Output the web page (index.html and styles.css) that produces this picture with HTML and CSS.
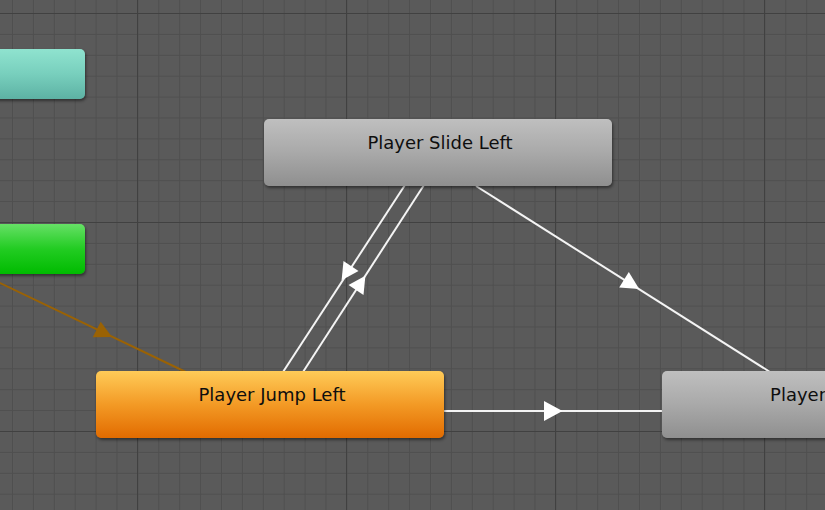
FILE: index.html
```html
<!DOCTYPE html>
<html>
<head>
<meta charset="utf-8">
<link rel="stylesheet" href="styles.css">
</head>
<body>
<div class="canvas">
  <svg class="graph" width="825" height="510" viewBox="0 0 825 510">
    <defs>
      <pattern id="minor" x="12" y="13" width="20.9" height="20.9" patternUnits="userSpaceOnUse">
        <rect x="0" y="0" width="1" height="20.9" fill="#4f4f4f"/>
        <rect x="0" y="0" width="20.9" height="1" fill="#4f4f4f"/>
      </pattern>
      <pattern id="major" x="137" y="13" width="209" height="209" patternUnits="userSpaceOnUse">
        <rect x="0" y="0" width="1" height="209" fill="#414141"/>
        <rect x="0" y="0" width="209" height="1" fill="#414141"/>
      </pattern>
    </defs>
    <rect width="825" height="510" fill="#5a5a5a"/>
    <rect width="825" height="510" fill="url(#minor)"/>
    <rect width="825" height="510" fill="url(#major)"/>

    <g class="edge-brown">
      <line x1="-5" y1="280.6" x2="190" y2="374"/>
      <polygon points="100.7,321.7 92.7,337.3 112,337"/>
    </g>
    <g class="edge">
      <line x1="283" y1="372" x2="405" y2="185"/>
      <line x1="303" y1="372" x2="424" y2="185"/>
      <polygon points="358.5,271 343.5,261 341.6,280.2"/>
      <polygon points="363.5,295 348.5,285 365.4,275.8"/>
      <line x1="476" y1="186" x2="770" y2="372"/>
      <polygon points="619.2,287.4 628.8,271.9 639.2,289.1"/>
      <line x1="444" y1="411" x2="662" y2="411"/>
      <polygon points="544,401 544,421 562.5,411"/>
    </g>
  </svg>

  <div class="node node-any"></div>
  <div class="node node-entry"></div>
  <div class="node node-state node-slide">Player Slide Left</div>
  <div class="node node-state node-jump">Player Jump Left</div>
  <div class="node node-state node-run">Player Run Left</div>
</div>
</body>
</html>
```

FILE: styles.css
```css
html, body {
  margin: 0;
  padding: 0;
  background: #5a5a5a;
}

.canvas {
  position: relative;
  width: 825px;
  height: 510px;
  overflow: hidden;
  font-family: "DejaVu Sans", "Liberation Sans", sans-serif;
}

.graph {
  position: absolute;
  left: 0;
  top: 0;
  display: block;
}

.edge line {
  stroke: #f4f4f4;
  stroke-width: 2;
}

.edge polygon {
  fill: #ffffff;
}

.edge-brown line {
  stroke: #9a6204;
  stroke-width: 2;
}

.edge-brown polygon {
  fill: #9a6204;
}

.node {
  position: absolute;
  box-sizing: border-box;
  border-radius: 5px;
  box-shadow: 1px 2px 3px rgba(0, 0, 0, 0.45);
}

.node-state {
  width: 348px;
  height: 67px;
  padding-top: 13px;
  padding-left: 4px;
  text-align: center;
  font-size: 18px;
  line-height: 21px;
  color: #0e0e0e;
  white-space: nowrap;
}

.node-any {
  left: -120px;
  top: 49px;
  width: 205px;
  height: 50px;
  background: linear-gradient(to bottom, #8fe3cf 0%, #78cfbd 50%, #5db2a4 100%);
}

.node-entry {
  left: -120px;
  top: 224px;
  width: 205px;
  height: 50px;
  background: linear-gradient(to bottom, #66e066 0%, #22cc22 50%, #00bb00 100%);
}

.node-slide {
  left: 264px;
  top: 119px;
  background: linear-gradient(to bottom, #bfbfbf 0%, #a9a9a9 50%, #8f8f8f 100%);
}

.node-jump {
  left: 96px;
  top: 371px;
  background: linear-gradient(to bottom, #ffcb58 0%, #f39a25 50%, #e26b00 100%);
}

.node-run {
  left: 662px;
  top: 371px;
  background: linear-gradient(to bottom, #bfbfbf 0%, #a9a9a9 50%, #8f8f8f 100%);
}
```
